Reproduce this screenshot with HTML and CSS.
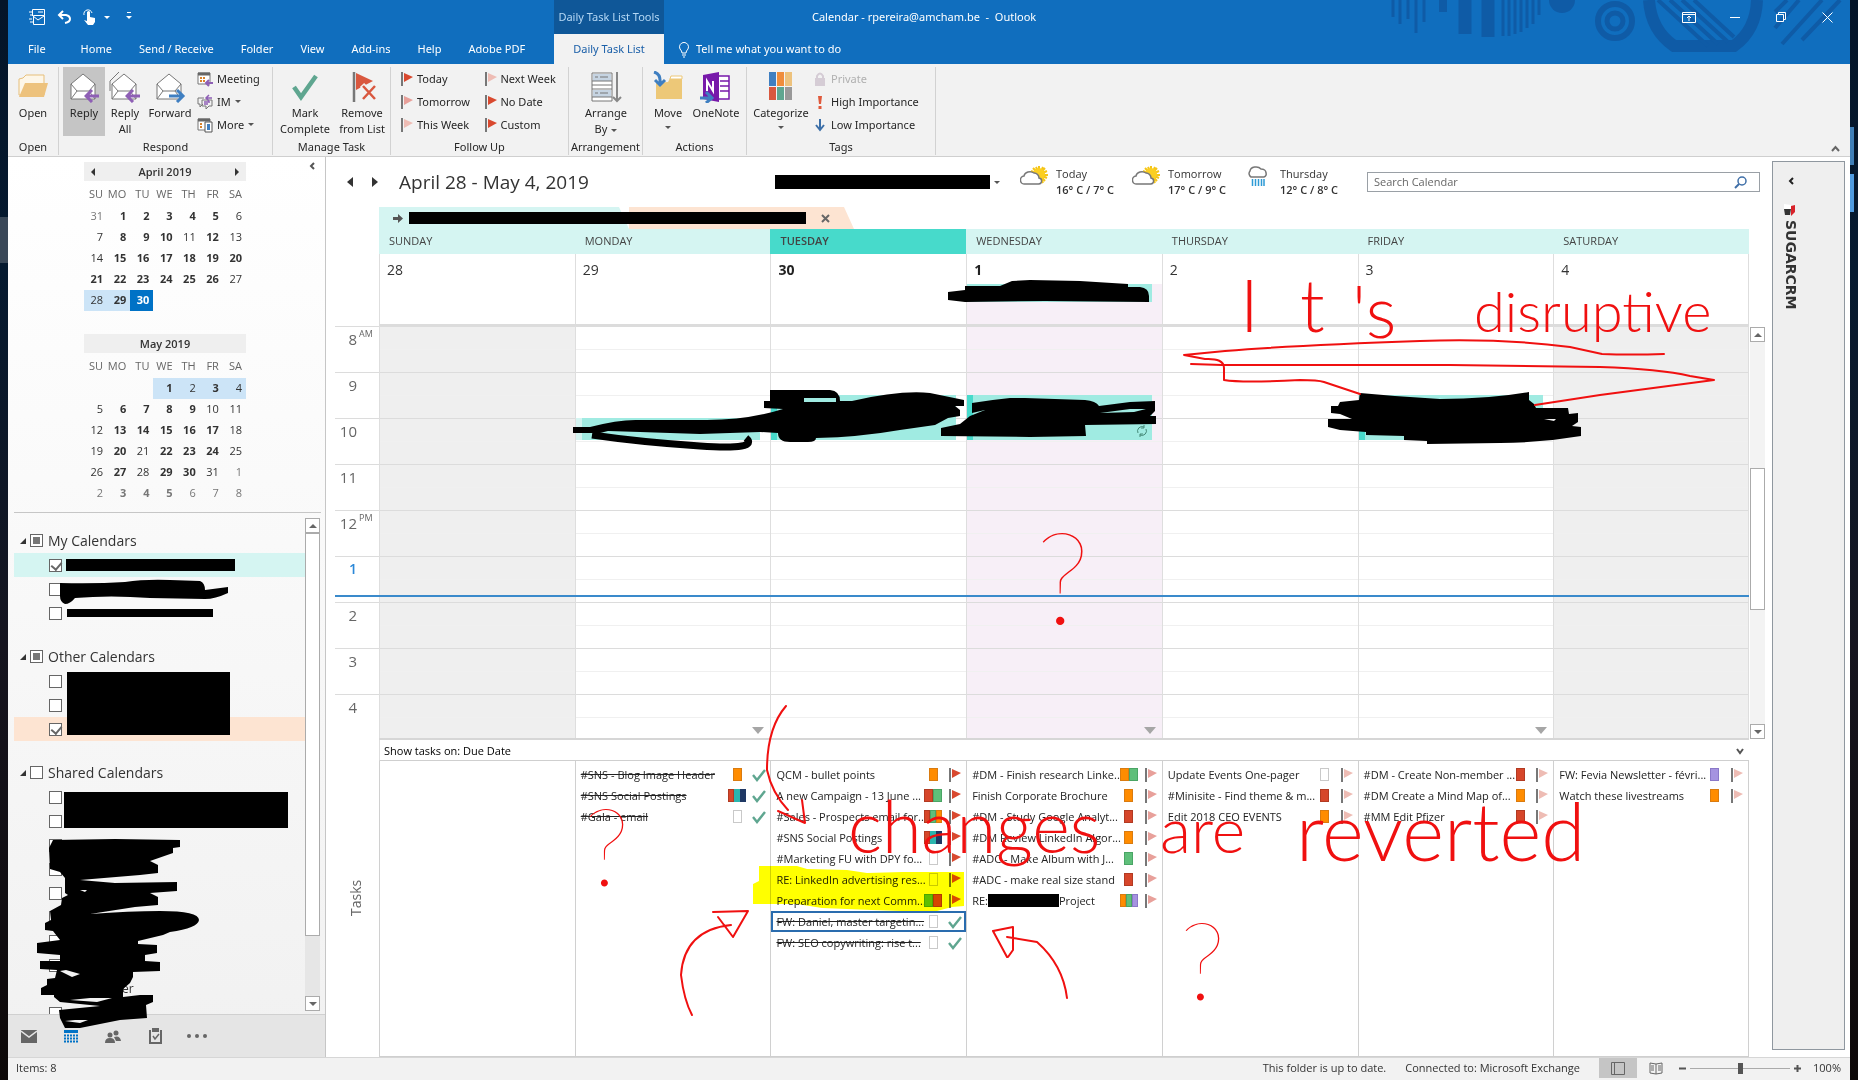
FILE: index.html
```html
<!DOCTYPE html>
<html lang="en">
<head>
<meta charset="utf-8">
<title>Calendar - Outlook</title>
<link rel="stylesheet" href="styles.css">
</head>
<body>
<svg class="defs" aria-hidden="true">
  <symbol id="flag" viewBox="0 0 12 14"><path d="M1 0v14" stroke="#777" stroke-width="2"/><path d="M3 1l9 4-9 5z" fill="currentColor"/></symbol>
  <symbol id="check" viewBox="0 0 14 14"><path d="M1 7l4 5 8-10" fill="none" stroke="#5fa690" stroke-width="2.4"/></symbol>
  <symbol id="env" viewBox="0 0 32 32"><path d="M3 13L15 3l12 10v15H3z" fill="#fff" stroke="#777"/><path d="M3 13l6 7h12l6-7M3 28l6-8M27 28l-6-8" fill="none" stroke="#777"/></symbol>
  <symbol id="back" viewBox="0 0 16 14"><path d="M15 7H3M8 1L2 7l6 6" fill="none" stroke="#8e5fb5" stroke-width="3"/></symbol>
  <symbol id="sun" viewBox="0 0 28 20"><g stroke="#f5c518" stroke-width="2"><path d="M19 0v17M10 9h18M13 2l12 13M25 2L13 15M16 1l7 16M23 1l-7 16M11 5l16 7M11 12l16-7"/></g><circle cx="19" cy="8" r="6" fill="#fbcf22"/><path d="M5 18a4 4 0 01-1-8 6 5 0 0110-3 5 5 0 015 5 3 3 0 01-1 6z" fill="#fff" stroke="#777" stroke-width="1.5"/></symbol>
</svg>
<div class="desktop">
<div class="window">
<header class="top">
  <svg class="deco" viewBox="0 0 460 64" aria-hidden="true"><g fill="none" stroke="#0f5ba6"><path stroke-width="3" d="M3 0v17M10 0v24M18 0v19M26 0v33M34 0v22"/><path stroke-width="8" d="M53 0v12"/><path stroke-width="13" d="M75 0v34M98 0v37"/><path stroke-width="3" d="M113 0v36M119 0v36M125 0v34M131 0v32M137 0v28M143 0v24M149 0v15"/><circle cx="225" cy="21" r="17" stroke-width="6"/><circle cx="225" cy="21" r="8" stroke-width="5"/><path stroke-width="12" d="M259 0q2 30 25 46h60q22-16 23-46"/><path stroke-width="4" d="M268 0l50 46M280 0l48 44M292 0l46 42M304 0l40 37M392 44l40-44M412 40l38-40M385 28l24-28M385 12l12-12"/></g><circle cx="172" cy="0" r="13" fill="#0f5ba6"/></svg>
  <div class="quick">
    <button aria-label="Send and receive"><svg width="16" height="18" viewBox="0 0 16 18"><g fill="none" stroke="#fff"><path d="M3.500 8V1.500h12v6M4.500 7.500h11v9h-11zM4 8l5 4 6-4M0 4h3M1 7h2M0 11h3M1 14h3M9 4h5"/></g></svg></button>
    <button aria-label="Undo"><svg width="14" height="14" viewBox="0 0 14 14"><path d="M6 1L2 5l4 4M2 5h7q4 1 4 4t-5 4" fill="none" stroke="#fff" stroke-width="2"/></svg></button>
    <button aria-label="Touch mode"><svg width="13" height="16" viewBox="0 0 13 16"><path d="M1 6a4 4 0 118-2" fill="none" stroke="#fff"/><path d="M4 3q2-2 3 0v5l5 1v4l-2 3H5l-4-5 3 1z" fill="#fff"/></svg></button>
    <i class="caret lt first"></i>
    <i class="caret lt line"></i>
  </div>
  <div class="ctx">Daily Task List Tools</div>
  <div class="titlebar"><span class="title">Calendar - rpereira@amcham.be&nbsp; -&nbsp; Outlook</span>
    <div class="winbtns">
      <button aria-label="Ribbon options"><svg width="14" height="11" viewBox="0 0 14 11"><path d="M.5.5h13v10H.500zM1 2.500h12M7 9V5M5 6l2-2 2 2" fill="none" stroke="#fff"/></svg></button>
      <button aria-label="Minimize"><svg width="10" height="10"><path d="M0 5.500h10" stroke="#fff"/></svg></button>
      <button aria-label="Restore"><svg width="10" height="10" viewBox="0 0 10 10"><path d="M.5 2.500h7v7h-7zM2.500 2V.500h7v7H8" fill="none" stroke="#fff"/></svg></button>
      <button aria-label="Close"><svg width="11" height="11"><path d="M.5.5l10 10M10.500.5l-10 10" stroke="#fff"/></svg></button>
    </div>
  </div>
  <nav class="tabs">
    <button class="file">File</button><button>Home</button><button>Send / Receive</button><button>Folder</button><button>View</button><button>Add-ins</button><button>Help</button><button>Adobe PDF</button>
  </nav>
  <button class="tab-on">Daily Task List</button>
  <button class="tell"><svg width="12" height="17" viewBox="0 0 12 17"><path d="M4 12q0-2-2-4a4.500 4.500 0 118 0q-2 2-2 4zM4 14h4M5 16h2" fill="none" stroke="#fff"/></svg>Tell me what you want to do</button>
</header>

<section class="ribbon" aria-label="Ribbon">
  <div class="group g-open"><div class="tools">
    <button class="big w50"><svg width="32" height="32" viewBox="0 0 32 32"><path d="M2 24V8l4-1 3-3h18v20z" fill="#fdf6e8" stroke="#e7bf7b"/><path d="M2 26l6-14h23l-4 14z" fill="#edc27d"/></svg>Open</button>
  </div><h2>Open</h2></div>
  <div class="group g-respond"><div class="tools">
    <button class="big w42 on"><svg width="32" height="32"><use href="#env" width="32" height="32"/><use href="#back" x="16" y="18" width="16" height="14"/></svg>Reply</button>
    <button class="big w40"><svg width="32" height="32"><path d="M1 20V10L10 1" fill="none" stroke="#777"/><use href="#env" width="32" height="32"/><use href="#back" x="16" y="18" width="16" height="14"/></svg>Reply<br>All</button>
    <button class="big w50"><svg width="32" height="32" viewBox="0 0 32 32"><use href="#env" width="32" height="32"/><path d="M15 25h13M23 19l6 6-6 6" fill="none" stroke="#3f7fc1" stroke-width="3"/></svg>Forward</button>
    <div class="smalls">
      <button><svg width="16" height="16" viewBox="0 0 16 16"><path d="M1 2h12v11H1z" fill="#fff" stroke="#777"/><path d="M1 3h12" stroke="#666" stroke-width="3"/><path d="M4 6v5M7 6v5" stroke="#d9822b" stroke-dasharray="2 1" stroke-width="2"/><path d="M16 12H9M12 9l-3 3 3 3" fill="none" stroke="#8e5fb5" stroke-width="2"/></svg>Meeting</button>
      <button><svg width="16" height="16" viewBox="0 0 16 16"><path d="M1 4h6M1 4v6h2v3l3-3M5 6h10v6h-3l-3 3v-3H5z" fill="none" stroke="#777"/><path d="M15 4H9M12 1L9 4l3 3M7 8h6M7 10h4" fill="none" stroke="#8e5fb5" stroke-width="1.500"/></svg>IM<i class="caret"></i></button>
      <button><svg width="16" height="16" viewBox="0 0 16 16"><path d="M1 2h12v11H1z" fill="#fff" stroke="#777"/><path d="M1 3h12" stroke="#666" stroke-width="3"/><path d="M4 6v5" stroke="#d9822b" stroke-dasharray="2 1" stroke-width="2"/><path d="M8 5h7v10H8z" fill="#fff" stroke="#555"/><path d="M10 7h3v6h-3z" fill="#3f7fc1"/></svg>More<i class="caret"></i></button>
    </div>
  </div><h2>Respond</h2></div>
  <div class="group g-manage"><div class="tools">
    <button class="big w60"><svg width="32" height="32" viewBox="0 0 32 32"><path d="M5 16l7 10L27 5" fill="none" stroke="#5fa690" stroke-width="4.500"/></svg>Mark<br>Complete</button>
    <button class="big w54"><svg width="32" height="32" viewBox="0 0 32 32"><path d="M8 1v30" stroke="#777" stroke-width="2.500"/><path d="M10 2l17 8-17 9z" fill="#d9583f"/><path d="M16 14l14 14M30 14L16 28" stroke="#f2f2f2" stroke-width="6"/><path d="M17 15l12 13M29 15L17 28" stroke="#d9583f" stroke-width="2.500"/></svg>Remove<br>from List</button>
  </div><h2>Manage Task</h2></div>
  <div class="group g-follow"><div class="tools">
    <div class="smalls">
      <button><svg class="fl f1"><use href="#flag"/></svg>Today</button><button><svg class="fl f2"><use href="#flag"/></svg>Tomorrow</button><button><svg class="fl f3"><use href="#flag"/></svg>This Week</button>
    </div>
    <div class="smalls">
      <button><svg class="fl f3"><use href="#flag"/></svg>Next Week</button><button><svg class="fl f1"><use href="#flag"/></svg>No Date</button><button><svg class="fl f1"><use href="#flag"/></svg>Custom</button>
    </div>
  </div><h2>Follow Up</h2></div>
  <div class="group g-arr"><div class="tools">
    <button class="big w54"><svg width="32" height="32" viewBox="0 0 32 32"><path d="M2 2h20v28H2z" fill="#fff" stroke="#777"/><path d="M3 3h18v7H3zM3 19h18v7H3z" fill="#c6d4e2"/><path d="M2 10h20M2 14h20M2 18h20M2 26h20M5 6h3M10 6h8M5 22h3M10 22h8" stroke="#777"/><path d="M27 1v29M23 26l4 4 4-4" fill="none" stroke="#888" stroke-width="2"/></svg>Arrange<br><span>By<i class="caret"></i></span></button>
  </div><h2>Arrangement</h2></div>
  <div class="group g-act"><div class="tools">
    <button class="big w46"><svg width="32" height="32" viewBox="0 0 32 32"><path d="M4 28V12l12-1 3-6h11v23z" fill="#edc878"/><path d="M19 5h11v3H18z" fill="#fff" stroke="#edc878"/><path d="M2 1q7 2 6 11M3 9l5 5 5-5" fill="none" stroke="#3f7fc1" stroke-width="3"/></svg>Move<i class="caret"></i></button>
    <button class="big w50"><svg width="32" height="32" viewBox="0 0 32 32"><path d="M17 5h12v23H17zM20 10h9M20 15h9M20 20h9" fill="#fff" stroke="#7719aa" stroke-width="1.500"/><path d="M3 4l16-3v30L3 28z" fill="#7719aa"/><path d="M7 20V10l6 10V10" fill="none" stroke="#fff" stroke-width="2"/><path d="M0 27h10M6 21l6 6-6 5" fill="none" stroke="#3f7fc1" stroke-width="3"/></svg>OneNote</button>
  </div><h2>Actions</h2></div>
  <div class="group g-tags"><div class="tools">
    <button class="big w60"><svg width="32" height="32" viewBox="0 0 32 32"><path d="M4 1h7v14H4z" fill="#3f7fc1"/><path d="M12 1h7v14h-7z" fill="#ef8d3c"/><path d="M20 1h7v14h-7z" fill="#edc27d"/><path d="M4 16h7v13H4z" fill="#d9583f"/><path d="M12 16h7v13h-7z" fill="#5fa690"/><path d="M20 16h7v13h-7z" fill="#999"/></svg>Categorize<i class="caret"></i></button>
    <div class="smalls">
      <button disabled><svg width="14" height="14" viewBox="0 0 14 14"><path d="M2 6h10v8H2z" fill="#d5ccd5"/><path d="M4 6V4q3-5 6 0v2" fill="none" stroke="#d5ccd5" stroke-width="2"/></svg>Private</button>
      <button><svg width="14" height="14" viewBox="0 0 14 14"><path d="M5 1h4l-1 8H6zM5.500 11h3v3h-3z" fill="#e0593b"/></svg>High Importance</button>
      <button><svg width="14" height="14" viewBox="0 0 14 14"><path d="M7 1v11M3 7l4 5 4-5" fill="none" stroke="#3b6fa8" stroke-width="2"/></svg>Low Importance</button>
    </div>
  </div><h2>Tags</h2></div>
  <button class="collapse" aria-label="Collapse ribbon"><svg width="9" height="7"><path d="M1 6l3.500-4L8 6" fill="none" stroke="#666" stroke-width="2"/></svg></button>
</section>

<div class="body">
<aside class="side">
  <div class="minis">
    <button class="fold" aria-label="Collapse pane"><svg width="6" height="8"><path d="M5 1L2 4l3 3" fill="none" stroke="#555" stroke-width="2"/></svg></button>
    <table class="mini"><caption><i class="tri l"></i><span>April 2019</span><i class="tri r"></i></caption>
    <tr><th>SU<th>MO<th>TU<th>WE<th>TH<th>FR<th>SA
    <tr><td class="o">31<td><b>1</b><td><b>2</b><td><b>3</b><td><b>4</b><td><b>5</b><td>6
    <tr><td>7<td><b>8</b><td><b>9</b><td><b>10</b><td>11<td><b>12</b><td>13
    <tr><td>14<td><b>15</b><td><b>16</b><td><b>17</b><td><b>18</b><td><b>19</b><td><b>20</b>
    <tr><td><b>21</b><td><b>22</b><td><b>23</b><td><b>24</b><td><b>25</b><td><b>26</b><td>27
    <tr><td class="s">28<td class="s"><b>29</b><td class="t"><b>30</b><td><td><td><td>
    </table>
    <table class="mini"><caption><span>May 2019</span></caption>
    <tr><th>SU<th>MO<th>TU<th>WE<th>TH<th>FR<th>SA
    <tr><td><td><td><td class="s"><b>1</b><td class="s">2<td class="s"><b>3</b><td class="s">4
    <tr><td>5<td><b>6</b><td><b>7</b><td><b>8</b><td><b>9</b><td>10<td>11
    <tr><td>12<td><b>13</b><td><b>14</b><td><b>15</b><td><b>16</b><td><b>17</b><td>18
    <tr><td>19<td><b>20</b><td>21<td><b>22</b><td><b>23</b><td><b>24</b><td>25
    <tr><td>26<td><b>27</b><td>28<td><b>29</b><td><b>30</b><td>31<td class="o">1
    <tr><td class="o">2<td class="o"><b>3</b><td class="o"><b>4</b><td class="o"><b>5</b><td class="o">6<td class="o">7<td class="o">8
    </table>
  </div>
  <div class="lists">
    <div class="list">
      <label class="head"><i class="tree"></i><input type="checkbox" class="mixed">My Calendars</label>
      <div class="cal teal"><input type="checkbox" checked aria-label="Calendar 1"></div>
      <div class="cal"><input type="checkbox" aria-label="Calendar 2"></div>
      <div class="cal"><input type="checkbox" aria-label="Calendar 3"></div>
      <label class="head gap"><i class="tree"></i><input type="checkbox" class="mixed">Other Calendars</label>
      <div class="cal"><input type="checkbox" aria-label="Other 1"></div>
      <div class="cal"><input type="checkbox" aria-label="Other 2"></div>
      <div class="cal peach"><input type="checkbox" checked aria-label="Other 3"></div>
      <label class="head gap"><i class="tree"></i><input type="checkbox">Shared Calendars</label>
      <div class="cal"><input type="checkbox" aria-label="Shared 1"></div>
      <div class="cal"><input type="checkbox" aria-label="Shared 2"></div>
      <div class="cal"><input type="checkbox" aria-label="Shared 3"></div>
      <div class="cal"><input type="checkbox" aria-label="Shared 4"></div>
      <div class="cal"><input type="checkbox" aria-label="Shared 5"></div>
      <div class="cal"><input type="checkbox" aria-label="Shared 6"></div>
      <div class="cal"><input type="checkbox" aria-label="Shared 7"></div>
      <div class="cal"><input type="checkbox" aria-label="Shared 8"></div>
      <div class="cal tail"><span>er</span></div>
      <div class="cal"><input type="checkbox" aria-label="Shared 10"></div>
    </div>
    <div class="scroll side-scroll"><i class="sb up"></i><i class="thumb"></i><i class="sb down"></i></div>
  </div>
  <nav class="modes">
    <button aria-label="Mail"><svg width="16" height="13" viewBox="0 0 16 13"><path d="M0 0h16v13H0z" fill="#666"/><path d="M0 1l8 6 8-6" fill="none" stroke="#e5e5e5" stroke-width="1.500"/></svg></button>
    <button aria-label="Calendar"><svg width="14" height="13" viewBox="0 0 14 13"><path d="M0 0h14v3H0z" fill="#0072c6"/><path d="M0 5.500h14M0 8.500h14M0 11.500h14" stroke="#0072c6" stroke-width="2" stroke-dasharray="2 1"/></svg></button>
    <button aria-label="People"><svg width="16" height="13" viewBox="0 0 16 13"><g fill="#666"><circle cx="5" cy="5" r="2.500"/><circle cx="11" cy="3" r="2.500"/><path d="M0 13q0-5 5-5t5 5zM9 7q6-2 7 4h-5z"/></g></svg></button>
    <button aria-label="Tasks"><svg width="13" height="16" viewBox="0 0 13 16"><path d="M1 2v13h11V2M4 3V1h5v2z" fill="none" stroke="#666" stroke-width="2"/><path d="M4 8l2 3 4-5" fill="none" stroke="#666" stroke-width="1.500"/></svg></button>
    <button aria-label="More"><svg width="20" height="4"><g fill="#666"><circle cx="2" cy="2" r="2"/><circle cx="10" cy="2" r="2"/><circle cx="18" cy="2" r="2"/></g></svg></button>
  </nav>
</aside>

<main class="main">
  <div class="bar">
    <button class="arr" aria-label="Previous"><i class="tri l big-t"></i></button><button class="arr" aria-label="Next"><i class="tri r big-t"></i></button>
    <h1>April 28 - May 4, 2019</h1>
    <span class="redact place"></span><i class="caret"></i>
    <div class="weather">
      <div class="wx"><svg width="28" height="20"><use href="#sun"/></svg><p>Today<b>16° C / 7° C</b></p></div>
      <div class="wx"><svg width="28" height="20"><use href="#sun"/></svg><p>Tomorrow<b>17° C / 9° C</b></p></div>
      <div class="wx"><svg width="28" height="20" viewBox="0 0 28 20"><path d="M7 11a4 4 0 01-1-6 6 4.500 0 0111-2 5 4 0 015 4 3 3 0 01-2 4z" fill="#fff" stroke="#777" stroke-width="1.500"/><path d="M8.500 13v7M11.500 13v7M14.500 13v7M17.500 13v7M20 13v7" stroke="#2e9bd6" stroke-width="1.500"/></svg><p>Thursday<b>12° C / 8° C</b></p></div>
    </div>
    <div class="search"><input type="text" placeholder="Search Calendar" aria-label="Search Calendar"><svg width="13" height="13" viewBox="0 0 13 13"><circle cx="8" cy="5" r="4" fill="none" stroke="#3f6fa8" stroke-width="1.500"/><path d="M5 8l-4 4" stroke="#3f6fa8" stroke-width="2"/></svg></div>
  </div>

  <div class="caltabs"><div class="ct one"><svg width="10" height="9"><path d="M0 3h5V0l5 4.500L5 9V6H0z" fill="#555"/></svg></div><div class="ct two"><button aria-label="Close calendar"><svg width="9" height="9"><path d="M1 1l7 7M8 1L1 8" stroke="#666" stroke-width="2"/></svg></button></div><span class="redact names"></span></div>

  <div class="sheet">
    <div class="days"><span>SUNDAY</span><span>MONDAY</span><span class="now">TUESDAY</span><span>WEDNESDAY</span><span>THURSDAY</span><span>FRIDAY</span><span>SATURDAY</span></div>
    <div class="dates"><div>28</div><div>29</div><div><b>30</b></div><div class="wed"><b>1</b><i></i></div><div>2</div><div>3</div><div>4</div></div>
    <ol class="hours"><li>8<sup>AM</sup></li><li>9</li><li>10</li><li>11</li><li>12<sup>PM</sup></li><li class="cur">1</li><li>2</li><li>3</li><li>4</li></ol>
    <div class="grid">
      <div class="off"></div>
      <div><i class="ev short"></i><i class="more"></i></div>
      <div><i class="ev"></i></div>
      <div class="pink"><i class="ev"></i><svg class="rec" width="12" height="12" viewBox="0 0 12 12"><path d="M2 8a4.500 4.500 0 016-6M10 4a4.500 4.500 0 01-6 6M8 0v3H5M4 12V9h3" fill="none" stroke="#487" /></svg><i class="more"></i></div>
      <div></div>
      <div><i class="ev"></i><i class="more"></i></div>
      <div class="off"></div>
      <div class="nowline"></div>
    </div>
    <div class="scroll main-scroll"><i class="sb up"></i><i class="thumb"></i><i class="sb down"></i></div>
    <div class="show"><span>Show tasks on: Due Date</span><svg width="8" height="7"><path d="M1 1l3 4 3-4" fill="none" stroke="#555" stroke-width="2"/></svg></div>
    <div class="tlabel">Tasks</div>
    <div class="tasks">
      <ul></ul>
      <ul>
        <li class="done"><span>#SNS - Blog Image Header</span><em><i class="or"></i></em><svg><use href="#check"/></svg></li>
        <li class="done"><span>#SNS Social Postings</span><em class="m"><i class="re"></i><i class="te"></i><i class="na"></i></em><svg><use href="#check"/></svg></li>
        <li class="done"><span>#Gala - email</span><em><i></i></em><svg><use href="#check"/></svg></li>
      </ul>
      <ul>
        <li><span>QCM - bullet points</span><em><i class="or"></i></em><svg class="f1"><use href="#flag"/></svg></li>
        <li><span>A new Campaign - 13 June ...</span><em class="m"><i class="re"></i><i class="gr"></i></em><svg class="f1"><use href="#flag"/></svg></li>
        <li><span>#Sales - Prospects email for...</span><em class="m"><i class="re"></i><i class="gr"></i><i class="or"></i></em><svg class="f1"><use href="#flag"/></svg></li>
        <li><span>#SNS Social Postings</span><em class="m"><i class="re"></i><i class="te"></i><i class="na"></i></em><svg class="f1"><use href="#flag"/></svg></li>
        <li><span>#Marketing FU with DPY fo...</span><em><i></i></em><svg class="f1"><use href="#flag"/></svg></li>
        <li><span>RE: LinkedIn advertising res...</span><em><i></i></em><svg class="f1"><use href="#flag"/></svg></li>
        <li><span>Preparation for next Comm...</span><em class="m"><i class="gr"></i><i class="re"></i></em><svg class="f1"><use href="#flag"/></svg></li>
        <li class="done sel"><span>FW: Daniel, master targetin...</span><em><i></i></em><svg><use href="#check"/></svg></li>
        <li class="done"><span>FW: SEO copywriting: rise t...</span><em><i></i></em><svg><use href="#check"/></svg></li>
      </ul>
      <ul>
        <li><span>#DM - Finish research Linke...</span><em class="m"><i class="or"></i><i class="gr"></i></em><svg class="f2"><use href="#flag"/></svg></li>
        <li><span>Finish Corporate Brochure</span><em><i class="or"></i></em><svg class="f2"><use href="#flag"/></svg></li>
        <li><span>#DM - Study Google Analyt...</span><em><i class="re"></i></em><svg class="f2"><use href="#flag"/></svg></li>
        <li><span>#DM Review LinkedIn Algor...</span><em><i class="or"></i></em><svg class="f2"><use href="#flag"/></svg></li>
        <li><span>#ADC - Make Album with J...</span><em><i class="gr"></i></em><svg class="f2"><use href="#flag"/></svg></li>
        <li><span>#ADC - make real size stand</span><em><i class="re"></i></em><svg class="f2"><use href="#flag"/></svg></li>
        <li><span>RE:<i class="redact who"></i>Project</span><em class="m"><i class="or"></i><i class="gr"></i><i class="pu"></i></em><svg class="f2"><use href="#flag"/></svg></li>
      </ul>
      <ul>
        <li><span>Update Events One-pager</span><em><i></i></em><svg class="f3"><use href="#flag"/></svg></li>
        <li><span>#Minisite - Find theme &amp; m...</span><em><i class="re"></i></em><svg class="f3"><use href="#flag"/></svg></li>
        <li><span>Edit 2018 CEO EVENTS</span><em><i class="or"></i></em><svg class="f3"><use href="#flag"/></svg></li>
      </ul>
      <ul>
        <li><span>#DM - Create Non-member ...</span><em><i class="re"></i></em><svg class="f3"><use href="#flag"/></svg></li>
        <li><span>#DM Create a Mind Map of...</span><em><i class="or"></i></em><svg class="f3"><use href="#flag"/></svg></li>
        <li><span>#MM Edit Pfizer</span><em><i class="re"></i></em><svg class="f3"><use href="#flag"/></svg></li>
      </ul>
      <ul>
        <li><span>FW: Fevia Newsletter - févri...</span><em><i class="pu"></i></em><svg class="f3"><use href="#flag"/></svg></li>
        <li><span>Watch these livestreams</span><em><i class="or"></i></em><svg class="f3"><use href="#flag"/></svg></li>
      </ul>
    </div>
  </div>
</main>

<aside class="crm"><button aria-label="Expand panel"><svg width="6" height="8"><path d="M5 1L2 4l3 3" fill="none" stroke="#222" stroke-width="2"/></svg></button>
  <svg width="12" height="12" viewBox="0 0 12 12"><path d="M0 5h7l-1 6H1z" fill="#333"/><path d="M7 2l4-1v7l-4 4z" fill="#d8232a"/><path d="M0 0l7 1v4H0z" fill="#fff"/></svg>
  <span>SUGARCRM</span></aside>
</div>

<footer class="status"><span>Items: 8</span><span class="sync">This folder is up to date.</span><span class="conn">Connected to: Microsoft Exchange</span>
  <button class="view on" aria-label="Normal view"><svg width="14" height="13"><path d="M.5.5h13v12H.500zM3.500.5v12" fill="none" stroke="#666"/></svg></button>
  <button class="view" aria-label="Reading view"><svg width="14" height="13"><path d="M1 1l6 1 6-1v10l-6 1-6-1zM7 2v10M2 4h3M2 6h3M2 8h3M9 4h3M9 6h3M9 8h3" fill="none" stroke="#666"/></svg></button>
  <button class="zb" aria-label="Zoom out"><svg width="7" height="7"><path d="M0 3.500h7" stroke="#555" stroke-width="2"/></svg></button>
  <input type="range" aria-label="Zoom" min="0" max="100" value="50">
  <button class="zb" aria-label="Zoom in"><svg width="7" height="7"><path d="M0 3.500h7M3.500 0v7" stroke="#555" stroke-width="2"/></svg></button>
  <span class="pct">100%</span></footer>
</div>
</div>

<svg class="marker" viewBox="0 0 1858 1080" aria-hidden="true"><path fill="#ff0" d="M759 866l38 0 10 3 40 1 20 3 35-1 62 0v34l-12 1-15 4-35 0-30-1-50-2-25-4-44 0v-20l6-3z"/></svg>
<svg class="ink" viewBox="0 0 1858 1080">
  <g fill="#000">
    <path d="M66 559h169v12H66zM67 609h146v8H67zM67 672h163v63H67zM64 792h224v36H64z"/>
    <path d="M60 583Q95 584 125 582 145 579 170 580L200 581Q205 583 205 590L228 587 228 593Q215 599 205 599L150 598Q110 595 75 598 70 604 65 604 60 602 60 596z"/>
    <path d="M53 840L115 839 180 840 180 847 173 848 173 853 150 861 158 865 158 873 140 875 80 880 115 883 177 882 177 891 150 893 158 897 158 905 135 907 90 914Q130 911 160 911 199 911 199 920 198 928 170 932L163 935 138 941 138 944 157 945 157 953 145 955 145 961 160 962 160 971 133 972 133 977 130 983 123 989 123 997 140 995 153 995 153 1002 146 1005 147 1018 120 1020 80 1028 65 1028 60 1018 59 1010 100 1006 60 1002 54 997 54 995 41 995 41 988 47 985 47 979 55 978 57 970 40 969 40 961 60 961 60 955 37 953 37 943 60 940 53 931 45 930 45 923 51 920 50 911 61 905 62 898 68 895 65 893 65 878 60 872 50 869 49 848z"/>
    <path d="M948 292L965 290 965 286 1000 286 1012 281 1030 280 1080 281 1128 284 1128 287 1140 287Q1149 288 1149 296L1149 302 1045 301 965 302 948 300z"/>
    <path d="M573 427L590 427Q620 419 640 420L700 420Q745 421 783 409L764 408 764 401 770 401 770 390 830 390Q840 391 840 401L852 401Q900 390 930 393L964 400 964 406 955 406 960 410 960 416 948 418 935 425 900 430Q860 437 816 438 816 442 808 442L790 442Q778 442 778 433L760 432 700 434 640 432 608 431 600 433 573 433z"/>
    <path d="M972 403Q990 400 1010 398L1025 398 1085 400Q1096 401 1099 406L1130 402 1155 401 1155 411 1150 416 1156 416 1156 424 1085 425 1086 436 1030 437 941 436 941 428 960 424 970 416 985 410 972 413z"/>
    <path d="M1360 393L1395 396 1440 399Q1490 399 1529 392L1529 400 1534 404 1536 408 1568 408 1569 414 1578 413 1578 422 1572 426 1581 427 1581 436Q1540 443 1500 443L1427 444 1427 441 1404 440 1404 436 1366 435 1366 432 1340 430 1328 427 1328 419 1352 419 1340 414 1331 413 1331 406 1338 406 1340 402 1359 400z"/>
  </g>
  <path d="M592 435Q640 442 700 446T746 438" fill="none" stroke="#000" stroke-width="7"/>
  <g fill="#f2f2f2"><path d="M60 971l12 6 8-3-14-4zM70 1000l20-2 22 0-15 4zM65 1021l10-1 13 0-8 3zM80 890l7 0-2 2z"/></g>
  <path d="M804 398h32v4h-32zM1100 413l30-4 16 0-12 3z" fill="#a0ebe2"/><path d="M1544 419l12 0-2 2z" fill="#efefef"/>
  <g class="pen">
    <path d="M1664 354Q1630 355 1602 354L1570 347Q1500 338 1420 341 1300 345 1225 351L1184 355 1205 359Q1224 358 1224 368V380Q1242 383 1300 380 1318 380 1324 382L1360 394M1191 364L1222 365H1450L1600 367Q1660 369 1690 376L1714 380 1600 395 1535 405"/>
    <path d="M786 706Q767 728 767 770 772 793 788 810M802 800L805 823 778 811"/>
    <path d="M692 1015Q684 1000 681 975 684 930 731 925M713 912L748 911 733 937 718 917"/>
    <path d="M1067 998Q1063 965 1037 942L1007 937M1007 957L993 931 1013 927V950L1008 957"/>
  </g>
  <g class="hand">
    <text class="h-l" x="1240" y="332">I</text><text class="h-l" x="1300" y="332">t</text><text class="h-l" x="1352" y="338">'s</text><text class="h-s" x="1474" y="332">disruptive</text>
    <text class="h-l" x="848" y="853">changes</text><text class="h-m" x="1160" y="853">are</text><text class="h-xl" x="1296" y="861">reverted</text>
    <text class="q-l" x="1036" y="624">?</text><text class="q" x="584" y="886">?</text><text class="q" x="1180" y="1000">?</text>
  </g>
</svg>
</body>
</html>
```
FILE: styles.css
```css
* { box-sizing: border-box; }
body { margin: 0; position: relative; font: 11px/16px "Open Sans", "Noto Sans", sans-serif; color: #333; }
button { border: 0; background: none; padding: 0; margin: 0; font: inherit; color: inherit; }
h1, h2, p, ul, ol { margin: 0; padding: 0; list-style: none; font-weight: normal; }
svg { display: block; flex: none; }
.defs { position: absolute; width: 0; height: 0; }
.desktop { min-height: 100vh; padding: 0 8px; display: flex;
  background:
    linear-gradient(#3a4858, #3a4858) 0 217px / 8px 46px no-repeat,
    linear-gradient(#3f7fb8, #3f7fb8) calc(100% - 4px) 127px / 4px 38px no-repeat,
    linear-gradient(#4f9be0, #4f9be0) calc(100% - 4px) 174px / 4px 38px no-repeat,
    linear-gradient(#041428, #061a30 25%, #16151f 60%, #0d0808); }
.window { flex: 1; min-width: 0; display: flex; flex-direction: column; background: #fff; }

.top, .ribbon { font-family: "Noto Sans", "Open Sans", sans-serif; }
.top { position: relative; display: grid; grid-template: 34px 30px / 546px 110px 1fr; background: #106ebe; color: #fff; }
.deco { position: absolute; right: 0; top: 0; width: 460px; height: 64px; }
.quick { display: flex; align-items: center; gap: 12px; padding-left: 21px; }
.ctx { background: #0f5798; color: #b5d8f5; display: flex; align-items: center; justify-content: center; }
.titlebar { position: relative; display: flex; align-items: center; padding-left: 148px; }
.winbtns { margin-left: auto; display: flex; }
.winbtns button { width: 46px; display: flex; justify-content: center; }
.tabs { display: flex; }
.tabs button { padding: 0 14px 0 13px; white-space: nowrap; }
.tabs .file { padding: 0 22px 0 20px; }
.tab-on { background: #f2f2f2; color: #1a5fa8; }
.tell { position: relative; display: flex; align-items: center; gap: 6px; padding-left: 14px; }
.caret { width: 0; height: 0; border: 3px solid transparent; border-top-color: #555; border-bottom: 0; margin-left: 4px; }
.caret.lt { border-top-color: #fff; margin: 0; }
.caret.first { margin-left: -4px; }
.caret.line { margin-left: 4px; box-shadow: 0 -5px 0 -1px #fff; }

.ribbon { display: flex; background: #f2f2f2; border-bottom: 1px solid #cfcfcf; height: 93px; color: #262626; }
.group { flex: none; display: flex; flex-direction: column; margin: 3px 0 1px; border-right: 1px solid #d2d2d2; }
.group h2 { text-align: center; font-size: 11px; line-height: 16px; margin-top: 3px; white-space: nowrap; }
.tools { display: flex; height: 69px; flex: none; }
.g-open { width: 51px; } .g-respond { width: 214px; } .g-manage { width: 118px; }
.g-follow { width: 178px; } .g-arr { width: 74px; } .g-act { width: 104px; } .g-tags { width: 189px; }
.g-respond .tools, .g-tags .tools { padding-left: 4px; }
.g-manage .tools, .g-act .tools { padding-left: 2px; }
.g-follow .tools, .g-arr .tools { padding-left: 10px; }
.big { flex: none; display: flex; flex-direction: column; align-items: center; padding-top: 4px; line-height: 16px; white-space: nowrap; text-align: center; }
.big svg { margin-bottom: 2px; }
.big > .caret { margin: 5px 0 0; }
.big span .caret { display: inline-block; vertical-align: middle; }
.w40 { width: 40px; } .w42 { width: 42px; } .w46 { width: 46px; } .w50 { width: 50px; } .w54 { width: 54px; } .w60 { width: 60px; }
.big.on { background: #c5c5c5; }
.smalls { padding-left: 2px; width: 84px; }
.smalls button { height: 23px; display: flex; align-items: center; gap: 4px; white-space: nowrap; }
.smalls .caret { margin: 0; }
.smalls button:disabled { color: #b0b0b0; }
.g-follow .smalls { padding: 0; }
.fl { width: 12px; height: 14px; }
.f1 { color: #d9492f; } .f2 { color: #e8a09a; } .f3 { color: #eebcb4; }
.collapse { margin: auto 10px 4px auto; }

.body { flex: 1; display: flex; min-height: 0; }
.side { width: 318px; border-right: 1px solid #c6c6c6; display: flex; flex-direction: column; background: linear-gradient(#fff, #f1f1f1); }
.minis { position: relative; height: 356px; margin: 0 4px 0 6px; padding: 5px 0 0 70px; border-bottom: 1px solid #c6c6c6; }
.fold { position: absolute; right: 6px; top: 5px; }
.mini { border-collapse: collapse; width: 162px; table-layout: fixed; margin-bottom: 23px; font-size: 11px; line-height: 20px; }
.mini caption { height: 19px; background: #efefef; font-weight: 600; line-height: 19px; }
.mini caption span { display: inline-block; width: 140px; text-align: center; }
.mini th { font-weight: normal; color: #666; height: 25px; padding: 0 4px 0 0; text-align: right; }
.mini td { padding: 0 4px 1px 0; height: 21px; text-align: right; }
.mini .o { color: #777; }
.mini .s { background: #cce4f7; }
.mini .t { background: #0072c6; color: #fff; }
.tri { display: inline-block; width: 0; height: 0; border: 4px solid transparent; vertical-align: 0; }
.tri.l { border-right-color: #333; border-left: 0; } .tri.r { border-left-color: #333; border-right: 0; }
.tri.big-t { border-width: 5px; border-left-width: 6px; }
.tri.l.big-t { border-left-width: 0; border-right-width: 6px; } .tri.r.big-t { border-right-width: 0; }
.lists { flex: 1 1 0; min-height: 0; overflow: hidden; display: flex; padding: 5px 5px 0 6px; }
.list { flex: 1; padding-top: 10px; }
.head { display: flex; align-items: center; height: 25px; font-size: 14px; padding-left: 6px; }
.head.gap { margin-top: 19px; }
.tree { width: 0; height: 0; border: 3px solid transparent; border-right-color: #333; border-bottom-color: #333; margin-right: 4px; }
.head input { margin-right: 5px; }
.cal { height: 24px; display: flex; align-items: center; padding-left: 35px; }
.teal { background: #d5f5f2; } .peach { background: #fde4d2; }
.tail { padding-left: 108px; font-size: 12px; }
input[type=checkbox] { appearance: none; width: 13px; height: 13px; border: 1px solid #666; background: #fff; margin-top: 0; margin-bottom: 0; margin-left: 0; position: relative; }
input[type=checkbox]:checked::after { content: ""; position: absolute; left: 3px; top: 0; width: 5px; height: 8px; border: solid #666; border-width: 0 2px 2px 0; transform: rotate(40deg); }
.mixed { box-shadow: inset 0 0 0 2px #fff; }
input.mixed { background: #777; }
.scroll { display: flex; flex-direction: column; width: 15px; background: #e6e6e6; }
.sb { height: 15px; border: 1px solid #ababab; background: #fff; display: grid; place-items: center; }
.sb::after { content: ""; border: 4px solid transparent; }
.up::after { border-bottom-color: #666; border-top: 0; } .down::after { border-top-color: #666; border-bottom: 0; }
.thumb { background: #fff; border: 1px solid #ababab; }
.down { margin-top: auto; }
.side-scroll .thumb { flex: 0 0 403px; }
.side-scroll { margin-bottom: 3px; }
.modes { height: 43px; background: #e5e5e5; border-top: 1px solid #d0d0d0; display: flex; align-items: center; }
.modes button { width: 42px; display: flex; justify-content: center; }

.main { flex: 1; min-width: 0; display: flex; flex-direction: column; padding: 0 7px 0 9px; }
.bar { height: 50px; display: flex; align-items: center; margin-right: 5px; }
.arr { width: 25px; display: flex; justify-content: center; }
h1 { font-size: 19px; line-height: 24px; margin-left: 12px; white-space: nowrap; }
.arr:first-child { margin-left: 2px; }
.redact { background: #000; }
.place { margin-left: auto; width: 215px; height: 14px; }
.weather { display: flex; margin-left: 20px; }
.wx { width: 112px; display: flex; gap: 8px; white-space: nowrap; }
.wx b { display: block; font-weight: 600; }
.search { width: 393px; margin-left: 11px; height: 20px; border: 1px solid #9aa0a6; display: flex; align-items: center; padding: 0 12px 0 6px; }
.search input { flex: 1; border: 0; outline: 0; padding: 0; font: inherit; }
.search input::placeholder { color: #666; opacity: 1; }
.caltabs { position: relative; height: 22px; margin-left: 44px; display: flex; }
.ct { display: flex; align-items: center; height: 22px; }
.one { width: 250px; padding-left: 14px; background: #d5f5f2; clip-path: polygon(0 0, 240px 0, 250px 22px, 0 22px); }
.two { width: 225px; background: #fde4d2; justify-content: flex-end; padding-right: 24px; clip-path: polygon(0 0, 215px 0, 225px 22px, 0 22px); }
.names { position: absolute; left: 30px; top: 5px; width: 397px; height: 12px; }

.sheet { flex: 1; display: grid; grid-template: 25px 72px 414px 21px 1fr / 44px minmax(0, 1fr) 16px; }
.days, .dates, .grid, .tasks { grid-column: 2; display: grid; grid-template-columns: repeat(7, minmax(0, 1fr)); }
.days span { background: #d5f5f2; padding-left: 10px; line-height: 24px; color: #444; }
.days .now { background: #47dacb; font-weight: 600; }
.dates { border-bottom: 2px solid #dcdcdc; font-size: 14px; }
.dates div { border-left: 1px solid #dedede; padding: 8px 7px 0; }
.dates div:last-child { border-right: 1px solid #dedede; }
.dates b { color: #222; }
.dates .wed { background: linear-gradient(#f7eff7, #f7eff7) 0 30px no-repeat; position: relative; }
.wed i { position: absolute; left: 0; right: 10px; top: 30px; height: 18px; background: #a0ebe2; }
.hours { grid-area: 3 / 1; }
.hours li { height: 46px; border-top: 1px solid #dcdcdc; padding: 2px 22px 0 0; text-align: right; font-size: 15px; line-height: 20px; color: #666; position: relative; }
.hours sup { position: absolute; left: 24px; top: 1px; font-size: 9px; line-height: 12px; }
.hours .cur { color: #2b88d8; font-weight: 600; font-size: 14px; }
.grid { position: relative; border-bottom: 2px solid #d6d6d6; }
.grid > div { position: relative; border-left: 1px solid #dedede;
  background: repeating-linear-gradient(transparent 0 23px, #f0f0f0 23px 24px, transparent 24px 46px), repeating-linear-gradient(#dcdcdc 0 1px, transparent 1px 46px); }
.grid > .off:nth-child(7) { border-right: 1px solid #dedede; }
.grid .off { background-color: #efefef; } .grid .pink { background-color: #f7eff7; }
.ev { position: absolute; left: 0; right: 10px; top: 69px; height: 45px; background: #a0ebe2; border-left: 6px solid #47dacb; }
.ev.short { top: 92px; height: 22px; border-left-color: #d5f5f2; }
.rec { position: absolute; right: 14px; top: 99px; }
.more { position: absolute; right: 6px; bottom: 4px; border: 6px solid transparent; border-top: 7px solid #a6a6a6; border-bottom: 0; }
.grid .nowline { position: absolute; left: -44px; right: 0; top: 269px; height: 2px; background: #3a8acb; border: 0; }
.main-scroll { grid-area: 3 / 3; width: 15px; margin: 1px 0 1px 1px; background: #f3f3f3; }
.main-scroll .thumb { margin-top: 126px; height: 142px; }
.show { grid-area: 4 / 2; display: flex; align-items: center; justify-content: space-between; padding: 2px 5px 0 4px; border-bottom: 1px solid #cfcfcf; color: #000; border-left: 1px solid #dedede; }
.tlabel { grid-area: 5 / 1; writing-mode: vertical-rl; transform: rotate(180deg); font-size: 14px; line-height: 42px; text-align: center; color: #666; padding-top: 22px; }
.tasks { grid-area: 5 / 2; border-bottom: 1px solid #cfcfcf; color: #222; }
.tasks ul { border-left: 1px solid #d0d0d0; padding-top: 3px; }
.tasks ul:last-child { border-right: 1px solid #d0d0d0; }
.tasks li { height: 21px; display: flex; align-items: center; padding: 0 4px 0 5px; white-space: nowrap; }
.tasks span { flex: 1; min-width: 0; display: flex; align-items: center; }
.tasks em { width: 18px; display: flex; justify-content: center; }
.tasks em i { width: 9px; height: 13px; border: 1px solid #c9c9c9; }
.tasks em.m i { flex: 1; }
.tasks em .or { background: #ff8c00; border-color: #d97b10; } .tasks em .re { background: #d6462a; border-color: #b23a22; } .tasks em .gr { background: #5fbf7a; border-color: #4aa565; }
.tasks em .te { background: #2bb5ae; border-color: #2bb5ae; } .tasks em .na { background: #1f3864; border-color: #1f3864; } .tasks em .pu { background: #a593e0; border-color: #8a78c8; }
.tasks svg { width: 14px; height: 14px; margin-left: 6px; }
.done span { display: block; text-decoration: line-through; }
.tasks .sel { outline: 2px solid #2a6cae; outline-offset: -2px; }
.who { width: 71px; height: 13px; }

.crm { width: 73px; margin: 4px 5px 7px 0; background: #efefef; border: 1px solid #8f979f; padding: 15px 0 0 11px; color: #333; }
.crm button { display: block; margin: 0 0 19px 4px; }
.crm span { display: block; writing-mode: vertical-rl; font: bold 14px/14px "DejaVu Sans", sans-serif; margin-top: 4px; }

.status { height: 23px; display: flex; align-items: center; background: #f2f2f2; padding: 0 9px 2px 8px; border-top: 1px solid #d6d6d6; }
.sync { margin-left: auto; } .conn { margin: 0 19px; }
.view { width: 38px; height: 20px; display: flex; align-items: center; justify-content: center; }
.view.on { background: #c5c5c5; }
.zb { margin: 0 4px; }
input[type=range] { appearance: none; width: 100px; height: 12px; margin: 0; background: linear-gradient(#aaa, #aaa) 0 50% / 100% 1px no-repeat; }
input[type=range]::-webkit-slider-thumb { appearance: none; width: 5px; height: 11px; background: #555; }
.pct { width: 36px; text-align: right; }

.marker, .ink { position: absolute; left: 0; top: 0; width: 100%; pointer-events: none; }
.marker { mix-blend-mode: multiply; }
.pen { fill: none; stroke: #f01010; stroke-width: 2; stroke-linejoin: round; stroke-linecap: round; }
.hand { fill: #f01010; font-family: Lato, "Open Sans", sans-serif; font-weight: 300; }
.h-s { font-size: 56px; } .h-m { font-size: 64px; } .h-l { font-size: 72px; } .h-xl { font-size: 80px; }
.q { font-size: 108px; font-weight: 200; } .q-l { font-size: 128px; font-weight: 200; }
```
